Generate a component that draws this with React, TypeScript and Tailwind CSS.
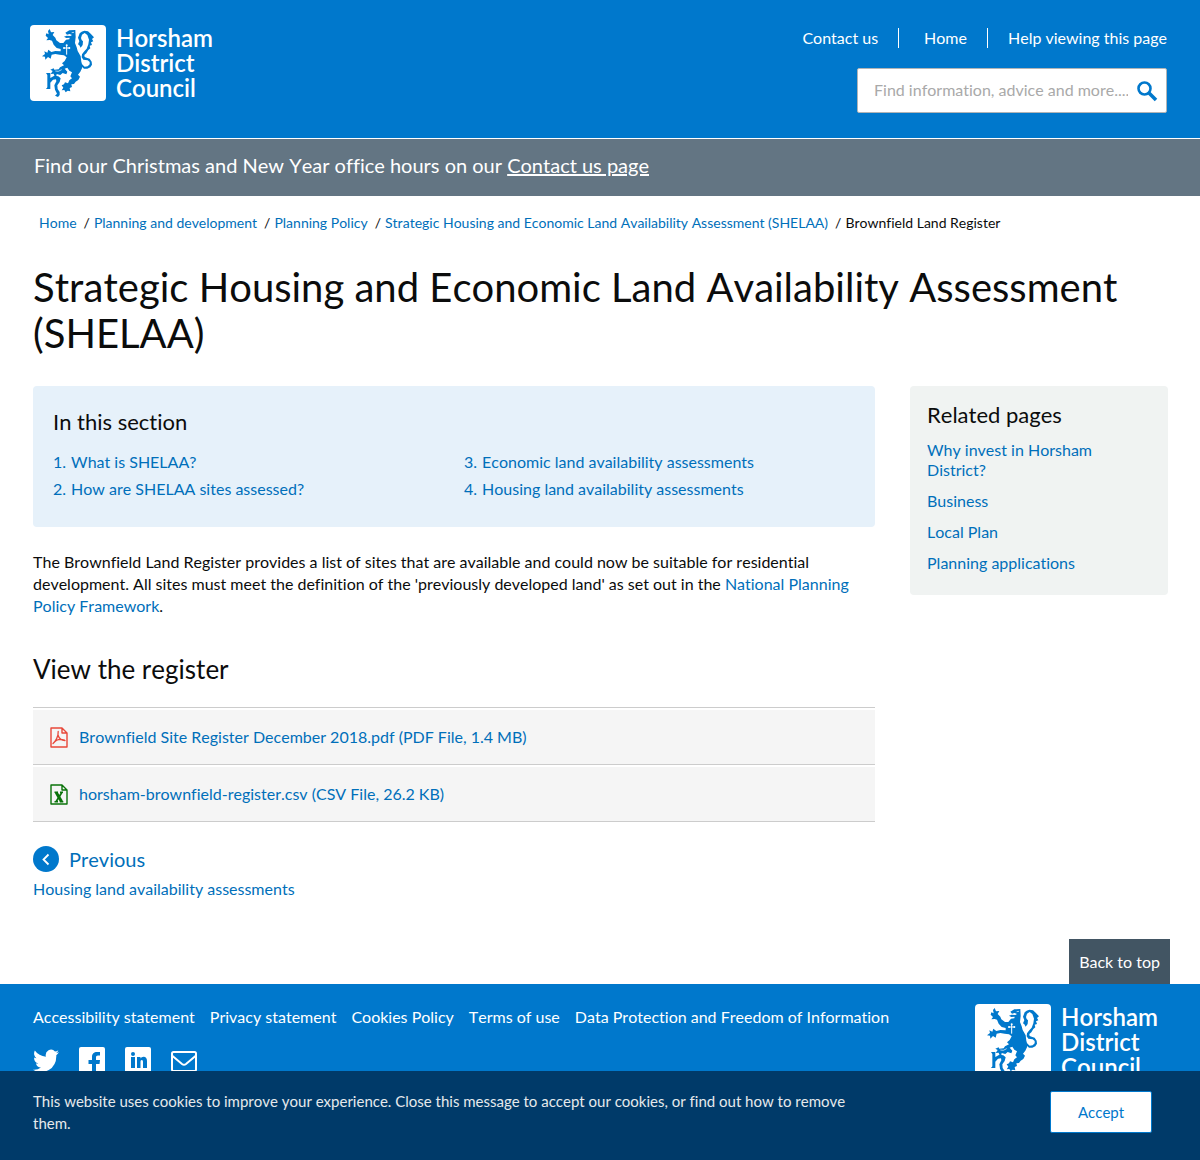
import React from 'react';

const link = 'text-[#006fba] hover:underline';

function Lion() {
  return (
    <svg viewBox="30 30 228 228" className="block size-[76px] shrink-0 rounded bg-white" aria-hidden="true">
      <g fill="#0078cc">
        <path d="M136 53 L148 46 L166 45 L167 66 L165 84 L170 97 L173 108 L182 124 L184 140 L187 151 L186 160 L181 170 L174 179 L180 185 L175 195 L167 200 L162 207 L154 208 L156 216 L149 219 L151 229 L143 227 L137 232 L133 225 L125 226 L130 218 L125 211 L132 208 L135 202 L144 205 L148 196 L156 190 L151 184 L156 172 L148 167 L142 158 L134 161 L142 170 L139 178 L128 174 L121 180 L110 177 L109 184 L103 182 L101 176 L92 177 L98 168 L91 164 L101 160 L103 164 L116 163 L120 157 L132 151 L126 145 L134 138 L140 127 L132 121 L119 119 L106 117 L95 119 L92 131 L84 126 L76 134 L75 125 L66 124 L75 117 L73 109 L82 113 L85 104 L94 111 L106 108 L122 109 L122 102 L110 99 L101 89 L96 77 L89 75 L79 76 L84 69 L77 62 L79 55 L86 58 L84 48 L89 42 L93 52 L103 51 L98 60 L106 68 L109 76 L120 84 L130 84 L138 74 L148 73 L149 68 L139 69 L132 65 L140 62 L151 63 L156 60 L149 57 L141 59 Z" />
        <path d="M179 55 L185 50 L193 47 L204 49 L212 56 L222 67 L216 72 L220 79 L213 82 L216 90 L209 92 L211 100 L205 105 L199 115 L193 120 L194 126 L200 128 L209 131 L215 140 L216 149 L211 157 L202 161 L192 161 L183 153 L186 148 L194 155 L203 154 L209 148 L209 141 L203 136 L190 134 L185 127 L186 118 L193 109 L200 101 L205 88 L207 74 L202 60 L194 54 L186 59 L183 69 L185 75 L189 79 L188 90 L182 98 L178 91 L174 88 L178 79 L174 68 Z" />
        <path d="M78 174 L91 174 L91 189 L103 182 L115 184 L122 190 L119 201 L112 211 L113 222 L119 231 L119 240 L114 246 L105 242 L111 236 L105 224 L103 211 L109 199 L108 193 L99 194 L91 203 L91 222 L78 222 L82 217 L82 180 Z" />
      </g>
      <path d="M140 90 V119 M132 99 H148" stroke="white" strokeWidth="3" />
      <g fill="white"><circle cx="140" cy="91" r="3"/><circle cx="132" cy="99" r="3"/><circle cx="148" cy="99" r="3"/></g>
      <path d="M155 53 L162 52 M106 168 L115 169 L125 164" fill="none" stroke="white" strokeWidth="2" />
    </svg>
  );
}

function Logo() {
  return (
    <a href="#" className="flex w-max items-start gap-[10px] text-white">
      <Lion />
      <span className="text-2xl leading-[25px] font-semibold">
        Horsham<br />District<br />Council
      </span>
    </a>
  );
}

function PdfIcon() {
  return (
    <svg width="18" height="21" viewBox="0 0 18 21" fill="none" stroke="#e8483a" strokeWidth="1.4" strokeLinejoin="round" aria-hidden="true">
      <path d="M1 1 H12 L17 6 V20 H1 Z M12 1 V6 H17" />
      <path d="M3 16.500 C5.500 14.500 8.500 9.500 8.200 4.500 M8 8 C9 11.500 11.500 13.500 15 13.500 M3.500 16 C6 12.800 10 11.600 14.500 13" strokeWidth="1.300" strokeLinecap="round" />
    </svg>
  );
}

function CsvIcon() {
  return (
    <svg width="18" height="21" viewBox="0 0 18 21" fill="none" stroke="#0a730a" strokeWidth="1.4" strokeLinejoin="round" aria-hidden="true">
      <path d="M1 1 H12 L17 6 V20 H1 Z M12 1 V6 H17" />
      <path d="M6.200 8.500 L11.500 17.500" strokeWidth="3" />
      <path d="M11.800 8.500 L6.200 17.500" strokeWidth="1.800" />
      <path d="M4.500 8.300 H8 M10 8.300 H13 M4.500 17.700 H8 M9.800 17.700 H13.300" strokeWidth="1.400" />
    </svg>
  );
}

const crumbs = ['Home', 'Planning and development', 'Planning Policy', 'Strategic Housing and Economic Land Availability Assessment (SHELAA)'];
const sections = ['What is SHELAA?', 'How are SHELAA sites assessed?', 'Economic land availability assessments', 'Housing land availability assessments'];
const related = ['Why invest in Horsham District?', 'Business', 'Local Plan', 'Planning applications'];
const files = [
  { name: 'Brownfield Site Register December 2018.pdf (PDF File, 1.4 MB)', icon: <PdfIcon /> },
  { name: 'horsham-brownfield-register.csv (CSV File, 26.2 KB)', icon: <CsvIcon /> },
];
const footerLinks = ['Accessibility statement', 'Privacy statement', 'Cookies Policy', 'Terms of use', 'Data Protection and Freedom of Information'];

function SocialIcons() {
  return (
    <div className="mt-[19px] flex gap-5">
      <a href="#" aria-label="Twitter">
        <svg width="26" height="28" viewBox="0 0 24 24" preserveAspectRatio="none" fill="white">
          <path d="M24 4.600a10 10 0 0 1-2.800.8 5 5 0 0 0 2.200-2.700c-1 .6-2 1-3.100 1.200a4.900 4.900 0 0 0-8.400 4.500C7.700 8.100 4.100 6.100 1.700 3.100a4.900 4.900 0 0 0 1.500 6.600c-.8 0-1.600-.2-2.200-.6v.1a4.900 4.900 0 0 0 3.900 4.800c-.7.200-1.500.2-2.200.1a4.900 4.900 0 0 0 4.600 3.400A9.900 9.900 0 0 1 0 19.500a14 14 0 0 0 21.500-12.400A10 10 0 0 0 24 4.600z" />
        </svg>
      </a>
      <a href="#" aria-label="Facebook">
        <svg width="26" height="26" viewBox="0 0 26 26">
          <rect width="26" height="26" rx="2" fill="white" />
          <path d="M13 26 V17 H9.500 V13 H13 V10 C13 6.500 15 5 18 5 H21 V8.500 H19 C17.500 8.500 17 9.200 17 10.500 V13 H21 L20.500 17 H17 V26 Z" fill="#0078cc" />
        </svg>
      </a>
      <a href="#" aria-label="LinkedIn">
        <svg width="26" height="26" viewBox="0 0 26 26">
          <rect width="26" height="26" rx="2" fill="white" />
          <g fill="#0078cc">
            <circle cx="8" cy="7" r="2" />
            <path d="M6 10 H10 V21 H6 Z M12 10 H15.500 V11.500 C16.200 10.500 17.300 9.800 18.500 9.800 C21 9.800 22 11.500 22 14 V21 H18 V15 C18 13.800 17.700 13 16.800 13 C15.800 13 15.500 13.800 15.500 15 V21 H12 Z" />
          </g>
        </svg>
      </a>
      <a href="#" aria-label="Email">
        <svg width="26" height="26" viewBox="0 0 26 26" fill="none" stroke="white" strokeWidth="2">
          <rect x="1" y="5" width="24" height="19" rx="1.500" />
          <path d="M1.500 9 L11 17 Q13 18.500 15 17 L24.500 9" />
        </svg>
      </a>
    </div>
  );
}

export default function App() {
  return (
    <div className="bg-white font-['Lato',sans-serif] text-base text-[#0b0c0c] [font-kerning:none] [font-variant-ligatures:none]">
      <header className="flex items-start justify-between border-b border-white bg-[#0078cc] pt-[25px] pr-[33px] pb-[25px] pl-[30px] text-white">
        <Logo />
        <div className="flex flex-col items-end">
          <nav className="flex items-center py-[3px] leading-5">
            <a href="#" className="border-r border-white pr-5">Contact us</a>
            <a href="#" className="border-r border-white pr-5 pl-[25px]">Home</a>
            <a href="#" className="pl-5">Help viewing this page</a>
          </nav>
          <form className="mt-[17px] flex h-[45px] w-[310px] items-center rounded-xs border border-[#b1b4b6] bg-white">
            <input type="text" aria-label="Search" placeholder="Find information, advice and more...." className="min-w-0 flex-1 pb-0.5 pl-4 outline-none placeholder:text-[#a9a9a9]" />
            <button type="submit" aria-label="Search" className="px-2">
              <svg width="22" height="22" viewBox="0 0 22 22" fill="none" stroke="#0078cc">
                <circle cx="8.500" cy="8.500" r="6" strokeWidth="2.600" />
                <path d="M13 13 L20 20" strokeWidth="3.500" />
              </svg>
            </button>
          </form>
        </div>
      </header>
      <div className="bg-[#637583] px-[34px] pt-3 pb-[17px] text-xl leading-7 text-white">
        Find our Christmas and New Year office hours on our <a href="#" className="underline">Contact us page</a>
      </div>
      <nav aria-label="Breadcrumb" className="px-[39px] pt-[17px] text-sm leading-5">
        <ol className="flex flex-wrap">
          {crumbs.map((c) => (
            <li key={c}><a href="#" className={link}>{c}</a><span className="pr-1 pl-[7px]">/</span></li>
          ))}
          <li>Brownfield Land Register</li>
        </ol>
      </nav>
      <div className="pr-8 pl-[33px]">
        <h1 className="pt-[31px] text-[40px] leading-[46px]">Strategic Housing and Economic Land Availability Assessment (SHELAA)</h1>
        <div className="mt-[30px] flex items-start gap-[35px]">
          <main className="min-w-0 flex-1">
            <section className="rounded bg-[#e6f1fa] px-5 pt-[22px] pb-[25px]">
              <h2 className="text-[22px] leading-7">In this section</h2>
              <ol className="mt-3 grid grid-flow-col grid-cols-[411px_1fr] grid-rows-2 text-[#006fba]">
                {sections.map((s, i) => (
                  <li key={s} className="flex gap-[5px] leading-[27px]"><span>{i + 1}.</span><a href="#" className={link}>{s}</a></li>
                ))}
              </ol>
            </section>
            <p className="mt-6 leading-[22px]">
              The Brownfield Land Register provides a list of sites that are available and could now be suitable for residential development. All sites must meet the definition of the 'previously developed land' as set out in the <a href="#" className={link}>National Planning Policy Framework</a>.
            </p>
            <h2 className="mt-9 text-[26px] leading-8">View the register</h2>
            <ul className="mt-[22px] border-t border-[#ccc]">
              {files.map((f) => (
                <li key={f.name} className="border-b border-[#ccc] pt-0.5">
                  <a href="#" className={`flex h-[54px] items-center gap-[11px] bg-[#f5f5f5] pl-[17px] ${link}`}>{f.icon}{f.name}</a>
                </li>
              ))}
            </ul>
            <a href="#" className={`mt-[23px] block ${link}`}>
              <span className="flex items-center gap-[10px] text-xl leading-7">
                <svg width="26" height="26" viewBox="0 0 26 26" aria-hidden="true">
                  <circle cx="13" cy="13" r="13" fill="#0078cc" />
                  <path d="M15.500 8.500 L10.500 13.500 L15.500 18.500" fill="none" stroke="white" strokeWidth="1.800" />
                </svg>
                Previous
              </span>
              <span className="mt-[5px] block leading-[22px]">Housing land availability assessments</span>
            </a>
          </main>
          <aside className="w-[258px] shrink-0 rounded bg-[#f0f3f2] px-[17px] pt-[15px] pb-[22px]">
            <h2 className="text-[22px] leading-7">Related pages</h2>
            <ul className="mt-[11px] flex flex-col gap-[11px] leading-5">
              {related.map((r) => <li key={r}><a href="#" className={link}>{r}</a></li>)}
            </ul>
          </aside>
        </div>
      </div>
      <div className="mt-[39px] flex justify-end pr-[30px]">
        <a href="#" className="bg-[#425563] px-[10px] pt-3 pb-[11px] leading-[22px] text-white">Back to top</a>
      </div>
      <footer className="flex items-start justify-between bg-[#0078cc] pt-5 pr-[42px] pb-20 pl-[33px] text-white">
        <div className="pt-0.5">
          <ul className="flex flex-wrap gap-x-[15px] leading-[22px]">
            {footerLinks.map((f) => <li key={f}><a href="#">{f}</a></li>)}
          </ul>
          <SocialIcons />
        </div>
        <Logo />
      </footer>
      <div role="region" aria-label="Cookies" className="fixed inset-x-0 bottom-0 flex items-center justify-between bg-[#003a69] pt-[19px] pr-12 pb-[26px] pl-[33px]">
        <p className="max-w-[842px] text-[15px] leading-[22px] text-[#e6e9ec]">
          This website uses cookies to improve your experience. Close this message to accept our cookies, or find out <a href="#">how to remove them.</a>
        </p>
        <button type="button" className="h-[42px] w-[102px] rounded-xs border border-[#0078cc] bg-white text-[15px] text-[#0078cc]">Accept</button>
      </div>
    </div>
  );
}
